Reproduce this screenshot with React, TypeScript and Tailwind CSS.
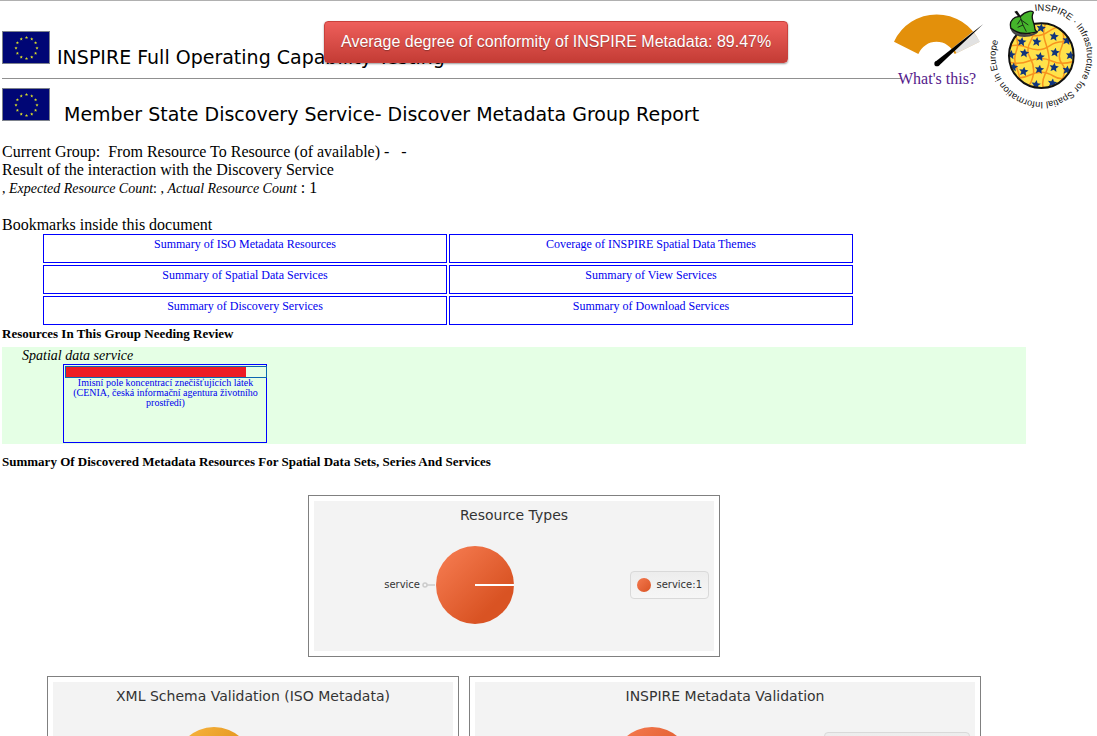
import type { ReactNode } from "react";

const SERIF = "font-['Liberation_Serif',serif]";
const DEJAVU = "font-['DejaVu_Sans',sans-serif]";

const bookmarks = [
  "Summary of ISO Metadata Resources",
  "Coverage of INSPIRE Spatial Data Themes",
  "Summary of Spatial Data Services",
  "Summary of View Services",
  "Summary of Discovery Services",
  "Summary of Download Services",
];

function EuFlag() {
  const stars = Array.from({ length: 12 }, (_, i) => {
    const a = (i * Math.PI) / 6;
    return { x: 24.5 + 10.5 * Math.sin(a), y: 17 - 10.5 * Math.cos(a) };
  });
  return (
    <svg viewBox="0 0 48 33" className="h-[33px] w-12 shrink-0" aria-hidden="true">
      <rect x="0.5" y="0.5" width="47" height="32" fill="#000675" stroke="#7d828c" />
      {stars.map((s, i) => (
        <path
          key={i}
          transform={`translate(${s.x} ${s.y})`}
          d="M0-1.6L.5-.5 1.6-.5.7.3 1 1.5 0 .8-1 1.5-.7.3-1.6-.5-.5-.5Z"
          fill="#d8dc28"
        />
      ))}
    </svg>
  );
}

function Gauge() {
  return (
    <svg viewBox="39 36 276 168" className="h-14 w-[92px]" aria-hidden="true">
      <path d="M42 125A141 141 0 0 1 298 125L224 162A59 59 0 0 0 115 162Z" fill="#e3900b" />
      <path d="M278 95Q292 108 300 125L230 160Q226 150 217 145Z" fill="#e2e2e2" />
      <path d="M164 187L310 72L178 196Z" fill="#000" />
      <circle cx="171" cy="191" r="8" fill="#000" />
    </svg>
  );
}

const starSpots = [
  [110, 122], [155, 122], [207, 106], [168, 81], [246, 118], [78, 161], [118, 156], [165, 167],
  [210, 154], [256, 163], [85, 198], [116, 211], [163, 205], [207, 199], [246, 207], [153, 251], [202, 246],
];

function InspireLogo() {
  return (
    <svg viewBox="0 0 336 336" className="size-28" role="img" aria-label="INSPIRE">
      <defs>
        <clipPath id="globe">
          <circle cx="169" cy="164" r="95" />
        </clipPath>
        <path id="ring" d="M150 30.300A137 137 0 0 1 188 301.700A137 137 0 0 1 150 30.300" />
      </defs>
      <circle cx="169" cy="164" r="97" fill="#ffe24a" />
      <g clipPath="url(#globe)">
        <g fill="none" stroke="#f7931e" strokeWidth="4.500">
          <path d="M60 100Q90 85 125 99T190 92T245 78" />
          <path d="M60 142Q90 125 128 140T195 134T275 130" />
          <path d="M60 178Q95 195 132 180T200 180T275 178" />
          <path d="M70 222Q98 240 135 222T205 225T270 215" />
          <path d="M133 60Q155 90 138 118T135 170T145 220T125 262" />
          <path d="M185 60Q170 90 180 120T192 170T180 220T180 270" />
          <path d="M222 65Q245 105 230 138T232 190T222 255" />
          <path d="M90 100Q104 125 94 150T95 200T105 250" />
        </g>
        {starSpots.map(([x, y]) => (
          <path
            key={`${x}-${y}`}
            transform={`translate(${x} ${y}) rotate(8)`}
            d="M0-14L4-5 14-4.500 6.500 2.500 9 12.500 0 7-9 12.500-6.500 2.500-14-4.500-4-5Z"
            fill="#10357c"
          />
        ))}
      </g>
      <circle cx="169" cy="164" r="97" fill="none" stroke="#111" strokeWidth="6" />
      <path d="M79 84Q90 110 133 104Q152 100 157 92Q140 108 110 99Z" fill="#555" stroke="#444" strokeWidth="5" />
      <path
        d="M78 82C70 57 91 45 105 47C124 27 145 28 145 35C135 50 147 60 149 79Q150 91 158 92Q135 98 124 97Q98 98 78 82Z"
        fill="#45b52b"
        stroke="#111"
        strokeWidth="4"
      />
      <path d="M106 48Q112 72 124 92M108 54L97 70M110 58L130 72M114 72L98 79" fill="none" stroke="#111" strokeWidth="2.500" />
      <path d="M88 32L96 29L109 48L101 48Z" fill="#111" />
      <text className="font-['Liberation_Sans_Narrow','Liberation_Sans',sans-serif]" fontSize="28" fill="#111">
        <textPath href="#ring">INSPIRE · Infrastructure for Spatial Information in Europe</textPath>
      </text>
    </svg>
  );
}

function Pie({ tone }: { tone: "orange" | "amber" }) {
  const [from, to] = tone === "orange" ? ["#f4794e", "#d95323"] : ["#f6b23c", "#d9860f"];
  return (
    <svg viewBox="0 0 78 78" className="size-[78px] shrink-0" aria-hidden="true">
      <defs>
        <linearGradient id={`pie-${tone}`} x1="0.100" y1="0.100" x2="0.750" y2="0.750">
          <stop offset="0" stopColor={from} />
          <stop offset="1" stopColor={to} />
        </linearGradient>
      </defs>
      <circle cx="39" cy="39" r="39" fill={`url(#pie-${tone})`} />
      <path d="M39 39H78" stroke="#fff" strokeWidth="2" />
    </svg>
  );
}

function ChartPanel({ title, wide, children }: { title: string; wide?: boolean; children: ReactNode }) {
  return (
    <figure className={`border border-[#808080] p-[5px] ${wide ? "w-[512px]" : "w-[412px]"}`}>
      <div className="h-[150px] bg-[#f3f3f3] pt-1">
        <figcaption className={`text-center text-sm leading-5 text-[#333] ${DEJAVU}`}>{title}</figcaption>
        <div className="flex items-start pt-[21px] pr-[5px]">{children}</div>
      </div>
    </figure>
  );
}

export default function App() {
  return (
    <div className={`h-screen overflow-hidden border-t border-[#b0b0b0] bg-white text-base leading-[18px] text-black ${SERIF}`}>
      <header className="relative flex items-start">
        <div className={`min-w-0 flex-1 pl-0.5 text-[19px] leading-6 ${DEJAVU}`}>
          <div className="flex items-start gap-[7px] pt-[30px]">
            <EuFlag />
            <h1 className="pt-[14px] whitespace-nowrap">INSPIRE Full Operating Capability Testing</h1>
          </div>
          <hr className="-mr-2 mt-[9px] border-[#909090]" />
          <div className="flex items-start gap-[14px] pt-[9px]">
            <EuFlag />
            <h2 className="pt-[14px] whitespace-nowrap">Member State Discovery Service- Discover Metadata Group Report</h2>
          </div>
        </div>
        <a href="#conformity" className="mt-[11px] text-[#551a8b]">
          <Gauge />
          <span className="block pl-[5px] pt-0.5">What's this?</span>
        </a>
        <InspireLogo />
        <div className="absolute left-[324px] top-[20px] rounded-sm border border-[#c9413c] bg-linear-to-b from-[#ee5f5b] to-[#c43c35] px-4 font-['Liberation_Sans',sans-serif] text-base leading-10 whitespace-nowrap text-white shadow-[0_1px_2px_rgba(0,0,0,0.4)] text-shadow-[0_1px_1px_rgba(0,0,0,0.3)]">
          Average degree of conformity of INSPIRE Metadata: 89.47%
        </div>
      </header>

      <main className="max-w-[1026px] pl-0.5">
        <section className="pt-[17px]">
          <p className="whitespace-pre">Current Group:  From Resource To Resource (of available) -   -</p>
          <p>Result of the interaction with the Discovery Service</p>
          <p>
            <span className="text-sm leading-[18px]">, <i>Expected Resource Count</i>: , <i>Actual Resource Count</i></span> : 1
          </p>
          <h3 className="pt-[18px]">Bookmarks inside this document</h3>
        </section>

        <nav className="ml-[41px] grid max-w-[810px] grid-cols-2 gap-0.5 text-xs leading-[18px]">
          {bookmarks.map((label) => (
            <a key={label} href="#summary" className="h-[29px] border border-[#0000ff] text-center text-[#0000ee]">
              {label}
            </a>
          ))}
        </nav>

        <section>
          <h3 className="text-[13px] leading-[18px] font-bold">Resources In This Group Needing Review</h3>
          <div className="mt-1 bg-[#e5ffe5] pb-px">
            <h4 className="pl-5 text-sm leading-[17px] italic">Spatial data service</h4>
            <a
              href="#resource"
              className="ml-[61px] block h-[79px] w-[204px] border border-[#0000ff] pl-px pt-px text-center text-[10px] leading-[10px] text-[#0000ee]"
            >
              <span className="-mr-px block h-3 border border-[#0b66b0]">
                <span className="block h-full w-[90%] bg-[#ed1c24]" />
              </span>
              <span className="block px-2">Imisní pole koncentrací znečišťujících látek (CENIA, česká informační agentura životního prostředí)</span>
            </a>
          </div>
        </section>

        <section>
          <h3 className="pt-[9px] text-[13px] leading-[18px] font-bold">
            Summary Of Discovered Metadata Resources For Spatial Data Sets, Series And Services
          </h3>
          <div className="flex justify-center pt-6">
            <ChartPanel title="Resource Types">
              <div className={`flex w-full items-center text-[10px] text-[#333] ${DEJAVU}`}>
                <span className="w-[106px] text-right">service</span>
                <svg viewBox="0 0 16 8" className="h-2 w-4 shrink-0" aria-hidden="true">
                  <circle cx="5" cy="4" r="2" fill="none" stroke="#ccc" strokeWidth="1.500" />
                  <path d="M7 4H15" stroke="#ccc" strokeWidth="1.500" />
                </svg>
                <Pie tone="orange" />
                <div className="ml-auto flex items-center gap-[5px] rounded-sm border border-[#d9d9d9] bg-linear-to-b from-[#ededed] to-[#f6f6f6] px-[6px] py-1">
                  <span className="size-[14px] rounded-full bg-linear-to-br from-[#f4794e] to-[#d95323]" />
                  service:1
                </div>
              </div>
            </ChartPanel>
          </div>
          <div className="flex justify-center gap-[10px] pt-[19px]">
            <ChartPanel title="XML Schema Validation (ISO Metadata)">
              <div className="pl-[122px]">
                <Pie tone="amber" />
              </div>
            </ChartPanel>
            <ChartPanel title="INSPIRE Metadata Validation" wide>
              <div className="pl-[138px]">
                <Pie tone="orange" />
              </div>
              <div className="ml-auto mt-[5px] h-16 w-[146px] rounded-sm border border-[#d9d9d9] bg-linear-to-b from-[#ededed] to-[#f6f6f6]" />
            </ChartPanel>
          </div>
        </section>
      </main>
    </div>
  );
}
